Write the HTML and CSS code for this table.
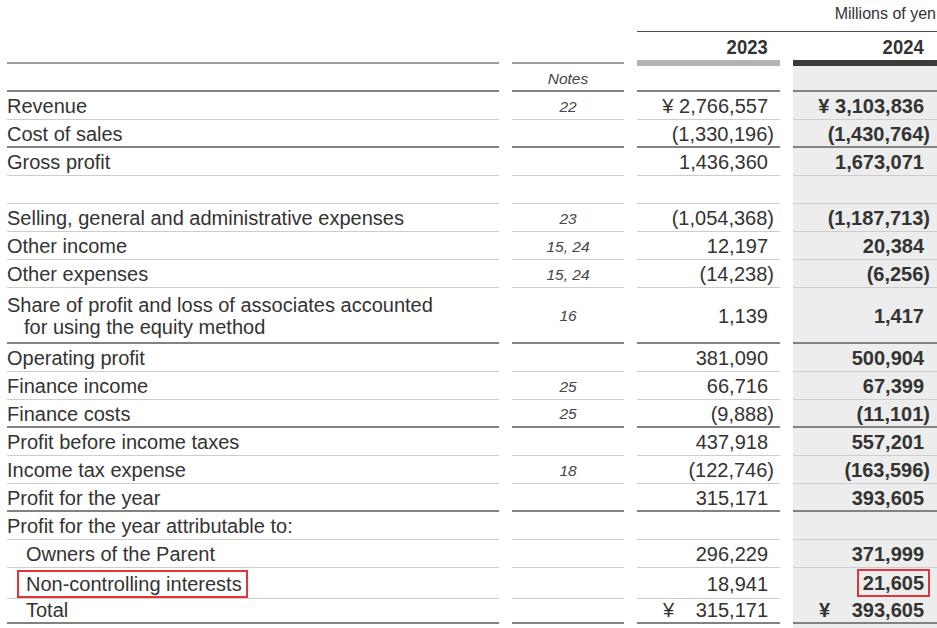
FILE: index.html
```html
<!DOCTYPE html>
<html lang="en">
<head>
<meta charset="utf-8">
<title>Consolidated Statement of Income</title>
<link rel="stylesheet" href="styles.css">
</head>
<body>
<div class="sheet">
  <div class="unit">Millions of yen</div>

  <div class="grid years">
    <div class="lead c1"></div>
    <div class="lead c2"></div>
    <div class="rule"></div>
    <div class="yr y23"><span class="yt">2023</span></div>
    <div class="yr y24"><span class="yt">2024</span></div>
  </div>

  <div class="grid row dk head">
    <div class="lbl"></div>
    <div class="note">Notes</div>
    <div class="v23"></div>
    <div class="v24 c24"></div>
  </div>

  <div class="grid row">
    <div class="lbl">Revenue</div>
    <div class="note">22</div>
    <div class="v23">¥ 2,766,557</div>
    <div class="v24 c24">¥ 3,103,836</div>
  </div>
  <div class="grid row dk">
    <div class="lbl">Cost of sales</div>
    <div class="note"></div>
    <div class="v23"><span class="neg">(1,330,196)</span></div>
    <div class="v24 c24"><span class="neg">(1,430,764)</span></div>
  </div>
  <div class="grid row">
    <div class="lbl">Gross profit</div>
    <div class="note"></div>
    <div class="v23">1,436,360</div>
    <div class="v24 c24">1,673,071</div>
  </div>
  <div class="grid row">
    <div class="lbl"></div>
    <div class="note"></div>
    <div class="v23"></div>
    <div class="v24 c24"></div>
  </div>
  <div class="grid row">
    <div class="lbl">Selling, general and administrative expenses</div>
    <div class="note">23</div>
    <div class="v23"><span class="neg">(1,054,368)</span></div>
    <div class="v24 c24"><span class="neg">(1,187,713)</span></div>
  </div>
  <div class="grid row">
    <div class="lbl">Other income</div>
    <div class="note">15, 24</div>
    <div class="v23">12,197</div>
    <div class="v24 c24">20,384</div>
  </div>
  <div class="grid row">
    <div class="lbl">Other expenses</div>
    <div class="note">15, 24</div>
    <div class="v23"><span class="neg">(14,238)</span></div>
    <div class="v24 c24"><span class="neg">(6,256)</span></div>
  </div>
  <div class="grid row dk tall">
    <div class="lbl two">
      <span>Share of profit and loss of associates accounted</span>
      <span class="cont">for using the equity method</span>
    </div>
    <div class="note">16</div>
    <div class="v23">1,139</div>
    <div class="v24 c24">1,417</div>
  </div>
  <div class="grid row">
    <div class="lbl">Operating profit</div>
    <div class="note"></div>
    <div class="v23">381,090</div>
    <div class="v24 c24">500,904</div>
  </div>
  <div class="grid row">
    <div class="lbl">Finance income</div>
    <div class="note">25</div>
    <div class="v23">66,716</div>
    <div class="v24 c24">67,399</div>
  </div>
  <div class="grid row dk">
    <div class="lbl">Finance costs</div>
    <div class="note">25</div>
    <div class="v23"><span class="neg">(9,888)</span></div>
    <div class="v24 c24"><span class="neg">(11,101)</span></div>
  </div>
  <div class="grid row">
    <div class="lbl">Profit before income taxes</div>
    <div class="note"></div>
    <div class="v23">437,918</div>
    <div class="v24 c24">557,201</div>
  </div>
  <div class="grid row">
    <div class="lbl">Income tax expense</div>
    <div class="note">18</div>
    <div class="v23"><span class="neg">(122,746)</span></div>
    <div class="v24 c24"><span class="neg">(163,596)</span></div>
  </div>
  <div class="grid row dk">
    <div class="lbl">Profit for the year</div>
    <div class="note"></div>
    <div class="v23">315,171</div>
    <div class="v24 c24">393,605</div>
  </div>
  <div class="grid row">
    <div class="lbl">Profit for the year attributable to:</div>
    <div class="note"></div>
    <div class="v23"></div>
    <div class="v24 c24"></div>
  </div>
  <div class="grid row">
    <div class="lbl ind">Owners of the Parent</div>
    <div class="note"></div>
    <div class="v23">296,229</div>
    <div class="v24 c24">371,999</div>
  </div>
  <div class="grid row">
    <div class="lbl"><span class="mark mark-lbl">Non-controlling interests</span></div>
    <div class="note"></div>
    <div class="v23">18,941</div>
    <div class="v24 c24"><span class="mark mark-num">21,605</span></div>
  </div>
  <div class="grid row dk">
    <div class="lbl ind">Total</div>
    <div class="note"></div>
    <div class="v23 split"><span>¥</span><span>315,171</span></div>
    <div class="v24 c24 split"><span>¥</span><span>393,605</span></div>
  </div>
  <div class="grid filler">
    <div></div>
    <div></div>
    <div></div>
    <div class="c24"></div>
  </div>
</div>
</body>
</html>
```

FILE: styles.css
```css
* {
  box-sizing: border-box;
}

body {
  margin: 0;
  background: #ffffff;
  color: #333333;
  font-family: "Liberation Sans", Arial, Helvetica, sans-serif;
}

.sheet {
  width: 937px;
  padding-left: 7px;
  overflow: hidden;
}

.unit {
  height: 31px;
  line-height: 28px;
  font-size: 16px;
  text-align: right;
  padding-right: 1px;
}

.grid {
  display: grid;
  grid-template-columns: 492px 112px 143px 144px;
  column-gap: 13px;
}

/* year header */
.years {
  height: 35px;
  align-items: start;
}

.years .lead {
  grid-row: 1;
  height: 33px;
  border-bottom: 2px solid #9d9d9d;
}

.years .c1 { grid-column: 1; }
.years .c2 { grid-column: 2; }

.years .rule {
  grid-column: 3 / 5;
  grid-row: 1;
  height: 1px;
  background: #4d4d4d;
}

.years .yr {
  grid-row: 1;
  height: 35px;
  padding-top: 2px;
  display: flex;
  align-items: center;
  justify-content: flex-end;
}

.years .y23 {
  grid-column: 3;
  padding-right: 12px;
  border-bottom: 6px solid #b3b3b3;
}

.years .y24 {
  grid-column: 4;
  padding-right: 13px;
  border-bottom: 6px solid #3b3b3b;
}

.yt {
  display: inline-block;
  font-size: 21px;
  font-weight: bold;
  transform: scaleX(0.88);
  transform-origin: right center;
}

/* body rows */
.row {
  height: 28px;
}

.row > div {
  display: flex;
  align-items: center;
  min-width: 0;
  padding-top: 2px;
  border-bottom: 1px solid #cdcdcd;
}

.row.dk > div {
  border-bottom: 2px solid #828282;
}

.row.head {
  height: 26px;
}

.row.tall {
  height: 56px;
}

.c24 {
  background: #ededed;
}

.lbl {
  font-size: 20px;
  white-space: nowrap;
}

.lbl.ind {
  padding-left: 19px;
}

.lbl.two {
  flex-direction: column;
  align-items: flex-start;
  justify-content: center;
  line-height: 22px;
}

.lbl .cont {
  padding-left: 17px;
}

.note {
  justify-content: center;
  font-size: 15.5px;
  font-style: italic;
  color: #454545;
}

.v23,
.v24 {
  justify-content: flex-end;
  font-size: 20px;
  white-space: nowrap;
}

.v23 {
  padding-right: 12px;
}

.v24 {
  padding-right: 13px;
  font-weight: bold;
}

.neg {
  margin-right: -6px;
}

.split {
  justify-content: space-between;
  padding-left: 26px;
}

.mark {
  display: inline-flex;
  align-items: center;
  height: 28px;
  border: 2px solid #e3343a;
}

.mark-lbl {
  margin-left: 10px;
  padding: 0 4px 0 7px;
}

.mark-num {
  padding: 0 4px;
  margin-right: -6px;
  position: relative;
  top: -1px;
}

.filler {
  height: 20px;
}
```
